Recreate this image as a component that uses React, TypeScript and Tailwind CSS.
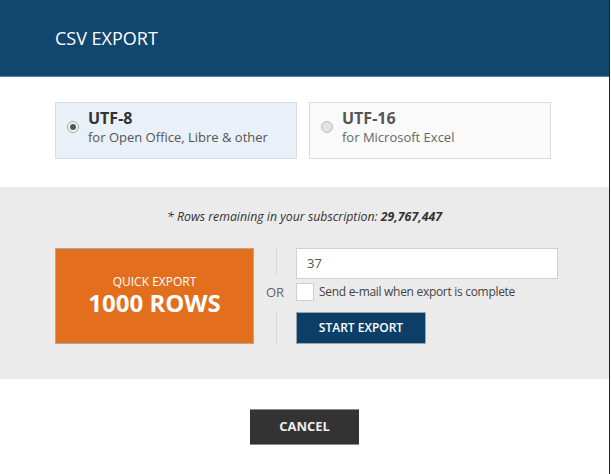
import React from "react";

function Radio({ checked }: { checked: boolean }) {
  return checked ? (
    <div className="w-[12px] h-[12px] rounded-full border border-[#a8a8a8] bg-[#f4f4f4] flex items-center justify-center shrink-0">
      <div className="w-[6px] h-[6px] rounded-full bg-[#555]" />
    </div>
  ) : (
    <div className="w-[12px] h-[12px] rounded-full border border-[#bdbdbd] bg-[#e2e2e2] shrink-0" />
  );
}

export default function App() {
  return (
    <div
      className="w-[611px] h-[474px] flex bg-white"
      style={{ fontFamily: '"Open Sans", "Liberation Sans", sans-serif' }}
    >
      <div className="w-[610px] h-full flex flex-col border-r border-[#222]">
        <div className="h-[77px] shrink-0 bg-[#11466e] border-b border-[#5c83a6] flex items-center px-[55px]">
          <span className="text-[18px] text-white leading-none">CSV EXPORT</span>
        </div>

        <div className="pt-[25px] pb-[28px] px-[55px] flex gap-[12px]">
          <div className="w-[242px] h-[57px] shrink-0 border border-[#d9dee3] bg-[#e9f0f7] flex items-center pl-[11px] pb-[7px] gap-[9px]">
            <Radio checked />
            <div className="flex flex-col">
              <span className="text-[16px] leading-[20px] font-bold text-[#333]">UTF-8</span>
              <span className="text-[13px] leading-[18px] text-[#555]">for Open Office, Libre &amp; other</span>
            </div>
          </div>
          <div className="w-[242px] h-[57px] shrink-0 border border-[#dcdcdc] bg-[#fafafa] flex items-center pl-[11px] pb-[7px] gap-[9px]">
            <Radio checked={false} />
            <div className="flex flex-col">
              <span className="text-[16px] leading-[20px] font-bold text-[#555]">UTF-16</span>
              <span className="text-[13px] leading-[18px] text-[#666]">for Microsoft Excel</span>
            </div>
          </div>
        </div>

        <div className="h-[192px] shrink-0 bg-[#ebebeb] pt-[22px] px-[55px] flex flex-col">
          <div className="text-center text-[12.3px] leading-[16px] italic text-[#333]">
            * Rows remaining in your subscription: <span className="font-bold">29,767,447</span>
          </div>
          <div className="mt-[23px] flex h-[96px]">
            <div className="w-[199px] h-[96px] shrink-0 bg-[#e36e1e] border border-[#b5a596] flex flex-col items-center justify-center text-white">
              <span className="text-[12px] leading-[14px]">QUICK EXPORT</span>
              <span className="text-[24px] leading-[28px] font-bold">1000 ROWS</span>
            </div>
            <div className="w-[42px] shrink-0 flex flex-col items-center">
              <div className="w-px h-[26px] bg-[#d6d6d6] ml-[2px]" />
              <div className="flex-1 flex items-center text-[13px] text-[#666]">OR</div>
              <div className="w-px h-[33px] bg-[#d6d6d6] ml-[2px]" />
            </div>
            <div className="flex flex-col shrink-0">
              <div className="w-[262px] h-[31px] bg-white border border-[#d0d0d0] flex items-center pl-[10px] text-[13px] text-[#555]">
                37
              </div>
              <div className="mt-[4px] flex items-center">
                <div className="w-[18px] h-[18px] bg-white border border-[#cfcfcf]" />
                <span className="ml-[5px] text-[12px] tracking-[-0.3px] text-[#444]">Send e-mail when export is complete</span>
              </div>
              <div className="mt-[11px] w-[130px] h-[32px] bg-[#0c3f68] border border-[#98a4ae] flex items-center justify-center text-white text-[12px] font-semibold">
                START EXPORT
              </div>
            </div>
          </div>
        </div>

        <div className="pt-[30px] flex justify-center">
          <div className="w-[109px] h-[36px] bg-[#333] border-t border-b border-[#8a8a8a] flex items-center justify-center text-[13px] font-bold text-[#eee]">
            CANCEL
          </div>
        </div>
      </div>
    </div>
  );
}
